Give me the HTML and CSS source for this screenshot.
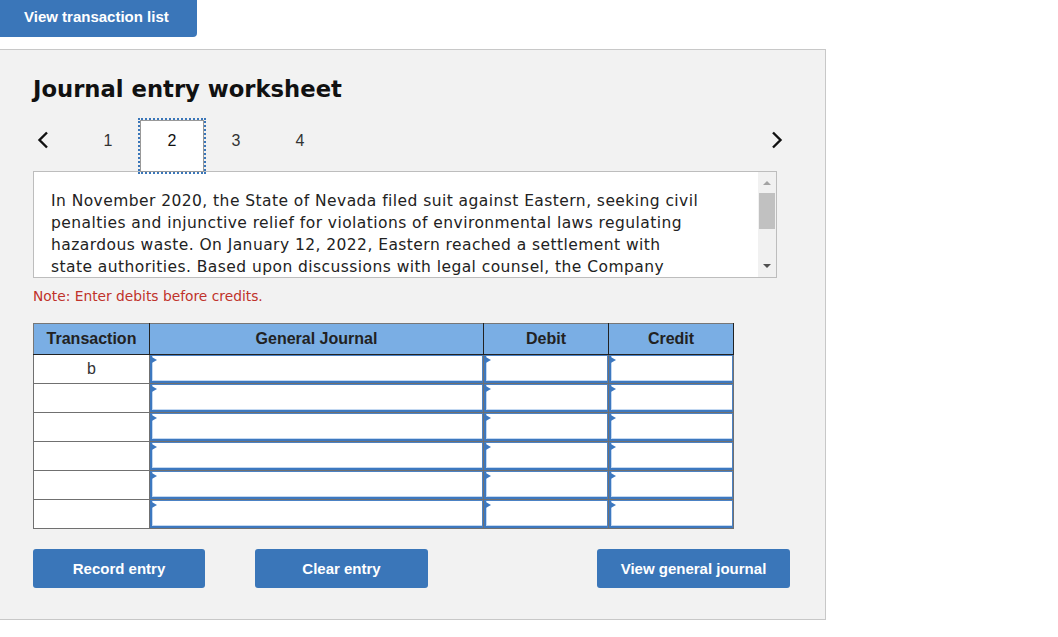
FILE: index.html
```html
<!DOCTYPE html>
<html lang="en">
<head>
  <meta charset="UTF-8" />
  <title>Journal entry worksheet</title>
  <link rel="stylesheet" href="styles.css">
</head>
<body>
  <button class="top-btn">View transaction list</button>

  <div class="worksheet">
    <h1>Journal entry worksheet</h1>

    <div class="nav">
      <span class="nav-arrow prev">
        <svg width="12" height="18" viewBox="0 0 12 18"><path d="M10 1.5 L2.5 9 L10 16.5" fill="none" stroke="#111" stroke-width="2.4"/></svg>
      </span>
      <div class="tabs">
        <span class="tab">1</span>
        <span class="tab active">2</span>
        <span class="tab">3</span>
        <span class="tab">4</span>
      </div>
      <span class="nav-arrow next">
        <svg width="12" height="18" viewBox="0 0 12 18"><path d="M2 1.5 L9.5 9 L2 16.5" fill="none" stroke="#111" stroke-width="2.4"/></svg>
      </span>
    </div>

    <div class="desc">
      <div class="desc-text">
        In November 2020, the State of Nevada filed suit against Eastern, seeking civil<br>
        penalties and injunctive relief for violations of environmental laws regulating<br>
        hazardous waste. On January 12, 2022, Eastern reached a settlement with<br>
        state authorities. Based upon discussions with legal counsel, the Company
      </div>
      <div class="scrollbar">
        <span class="sb-up"></span>
        <span class="sb-thumb"></span>
        <span class="sb-down"></span>
      </div>
    </div>

    <p class="note">Note: Enter debits before credits.</p>

    <table class="journal">
      <thead>
        <tr>
          <th class="col-tr">Transaction</th>
          <th class="col-gj">General Journal</th>
          <th class="col-amt">Debit</th>
          <th class="col-amt">Credit</th>
        </tr>
      </thead>
      <tbody>
        <tr><td>b</td><td class="in"><div></div></td><td class="in"><div></div></td><td class="in"><div></div></td></tr>
        <tr><td></td><td class="in"><div></div></td><td class="in"><div></div></td><td class="in"><div></div></td></tr>
        <tr><td></td><td class="in"><div></div></td><td class="in"><div></div></td><td class="in"><div></div></td></tr>
        <tr><td></td><td class="in"><div></div></td><td class="in"><div></div></td><td class="in"><div></div></td></tr>
        <tr><td></td><td class="in"><div></div></td><td class="in"><div></div></td><td class="in"><div></div></td></tr>
        <tr><td></td><td class="in"><div></div></td><td class="in"><div></div></td><td class="in"><div></div></td></tr>
      </tbody>
    </table>

    <div class="actions">
      <button class="btn">Record entry</button>
      <button class="btn clear">Clear entry</button>
      <button class="btn view">View general journal</button>
    </div>
  </div>
</body>
</html>
```

FILE: styles.css
```css
body {
  margin: 0;
  background: white;
  font-family: "Liberation Sans", Arial, sans-serif;
}

.top-btn {
  display: block;
  width: 197px;
  height: 37px;
  margin: 0;
  padding: 0 0 4px 24px;
  text-align: left;
  background: #3a76b9;
  color: white;
  border: none;
  border-radius: 0 0 4px 0;
  font-family: "Liberation Sans", Arial, sans-serif;
  font-weight: bold;
  font-size: 15px;
}

.worksheet {
  box-sizing: border-box;
  width: 827px;
  height: 571px;
  margin-top: 12px;
  margin-left: -1px;
  padding: 24px 36px 0 33px;
  background: #f2f2f2;
  border: 1px solid #c8c8c8;
}

h1 {
  margin: 0;
  font-family: "DejaVu Sans", Verdana, sans-serif;
  font-size: 22.7px;
  line-height: 30px;
  color: #111;
}

.nav {
  display: flex;
  height: 52px;
  margin-top: 16px;
  width: 754px;
}

.nav-arrow {
  display: flex;
  padding-top: 11px;
}

.nav-arrow.prev {
  width: 39px;
  padding-left: 4px;
}

.nav-arrow.next {
  margin-left: auto;
  padding-right: 4px;
}

.tabs {
  display: flex;
}

.tab {
  width: 64px;
  padding-bottom: 10px;
  display: flex;
  align-items: center;
  justify-content: center;
  font-size: 16px;
  color: #333;
}

.tab.active {
  box-sizing: border-box;
  background: white;
  border: 1px solid #999;
  outline: 2px dotted #3a76b9;
  color: #111;
}

.desc {
  display: flex;
  width: 744px;
  height: 107px;
  margin-top: -1px;
  box-sizing: border-box;
  background: white;
  border: 1px solid #bdbdbd;
}

.desc-text {
  flex: 1;
  overflow: hidden;
  white-space: nowrap;
  padding: 18px 0 0 17px;
  font-family: "DejaVu Sans", Verdana, sans-serif;
  font-size: 15.5px;
  line-height: 22px;
  letter-spacing: 0.44px;
  color: #222;
}

.scrollbar {
  width: 18px;
  background: #f1f1f1;
  display: flex;
  flex-direction: column;
  align-items: center;
}

.sb-up {
  margin-top: 9px;
  border-left: 4px solid transparent;
  border-right: 4px solid transparent;
  border-bottom: 4px solid #a3a3a3;
}

.sb-thumb {
  width: 16px;
  height: 36px;
  margin-top: 8px;
  background: #c1c1c1;
}

.sb-down {
  margin-top: auto;
  margin-bottom: 9px;
  border-left: 4px solid transparent;
  border-right: 4px solid transparent;
  border-top: 4px solid #505050;
}

.note {
  margin: 9px 0 0;
  font-family: "DejaVu Sans", Verdana, sans-serif;
  font-size: 13.8px;
  line-height: 18px;
  color: #c0322b;
}

.journal {
  margin-top: 18px;
  border-collapse: collapse;
  background: white;
}

.journal th {
  height: 30px;
  padding: 0;
  background: #7aaee4;
  border: 1px solid #222;
  border-top-color: #777;
  font-size: 16px;
  color: #222;
}

.journal th:first-child {
  border-left-color: #777;
}

.col-tr { width: 115px; }
.col-gj { width: 333px; }
.col-amt { width: 124px; }

.journal td {
  height: 28px;
  padding: 0;
  border: 1px solid #707070;
  text-align: center;
  font-size: 16px;
  color: #333;
}

.journal td.in {
  position: relative;
}

.journal td.in div {
  box-sizing: border-box;
  height: 28px;
  border-left: 2px solid #3d78bf;
  border-bottom: 2px solid #3d78bf;
  border-top: 1px solid #4c82c4;
  border-right: 1px solid #4c82c4;
  box-shadow: inset 1px -1px 0 #c3d8f1;
}

.journal td.in::before {
  content: "";
  position: absolute;
  left: 0;
  top: 1px;
  border-top: 4.5px solid transparent;
  border-bottom: 4.5px solid transparent;
  border-left: 7px solid #3d78bf;
}

.actions {
  display: flex;
  margin-top: 20px;
  width: 757px;
}

.btn {
  width: 172px;
  height: 39px;
  padding: 0;
  background: #3a76b9;
  color: white;
  border: none;
  border-radius: 3px;
  font-family: "Liberation Sans", Arial, sans-serif;
  font-weight: bold;
  font-size: 15px;
}

.btn.clear {
  margin-left: 50px;
  width: 173px;
}

.btn.view {
  margin-left: auto;
  width: 193px;
}
```
